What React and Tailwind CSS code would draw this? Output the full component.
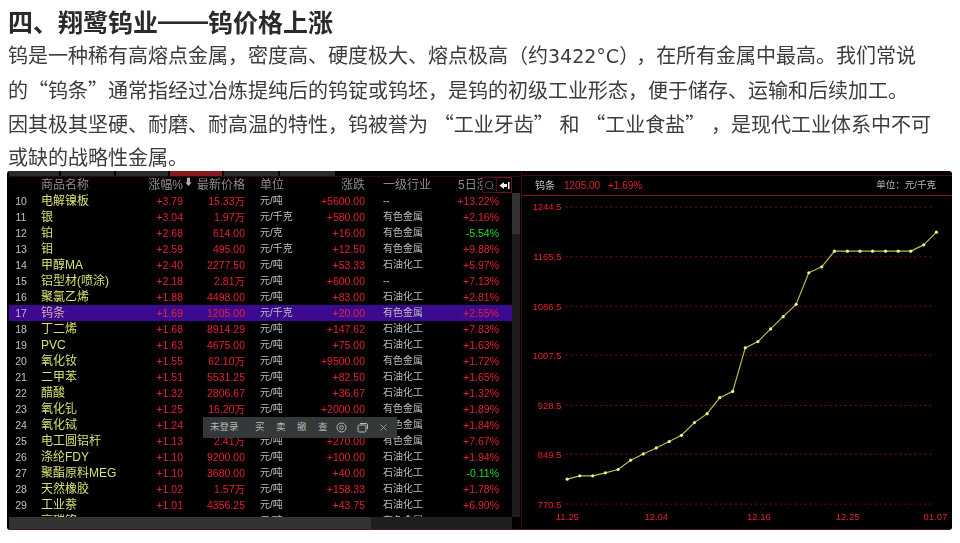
import React from "react";
import { Search, X } from "lucide-react";

const rows = [
  ["10","电解镍板","+3.79","15.33万","元/吨","+5600.00","--","+13.22%"],
  ["11","银","+3.04","1.97万","元/千克","+580.00","有色金属","+2.16%"],
  ["12","铂","+2.68","614.00","元/克","+16.00","有色金属","-5.54%"],
  ["13","钼","+2.59","495.00","元/千克","+12.50","有色金属","+9.88%"],
  ["14","甲醇MA","+2.40","2277.50","元/吨","+53.33","石油化工","+5.97%"],
  ["15","铝型材(喷涂)","+2.18","2.81万","元/吨","+600.00","--","+7.13%"],
  ["16","聚氯乙烯","+1.88","4498.00","元/吨","+83.00","石油化工","+2.81%"],
  ["17","钨条","+1.69","1205.00","元/千克","+20.00","有色金属","+2.55%"],
  ["18","丁二烯","+1.68","8914.29","元/吨","+147.62","石油化工","+7.83%"],
  ["19","PVC","+1.63","4675.00","元/吨","+75.00","石油化工","+1.63%"],
  ["20","氧化钕","+1.55","62.10万","元/吨","+9500.00","有色金属","+1.72%"],
  ["21","二甲苯","+1.51","5531.25","元/吨","+82.50","石油化工","+1.65%"],
  ["22","醋酸","+1.32","2806.67","元/吨","+36.67","石油化工","+1.32%"],
  ["23","氧化钆","+1.25","16.20万","元/吨","+2000.00","有色金属","+1.89%"],
  ["24","氧化铽","+1.24","","元/吨","","有色金属","+1.84%"],
  ["25","电工圆铝杆","+1.13","2.41万","元/吨","+270.00","有色金属","+7.67%"],
  ["26","涤纶FDY","+1.10","9200.00","元/吨","+100.00","石油化工","+1.94%"],
  ["27","聚酯原料MEG","+1.10","3680.00","元/吨","+40.00","石油化工","-0.11%"],
  ["28","天然橡胶","+1.02","1.57万","元/吨","+158.33","石油化工","+1.78%"],
  ["29","工业萘","+1.01","4356.25","元/吨","+43.75","石油化工","+6.90%"],
  ["30","高碳铬","+1.00","2.41万","元/吨","+240.00","有色金属","+7.48%"],
];

const pts = [
  [566.7,480],[579.3,476.7],[592.3,476.7],[605,473.7],[617.7,470.3],[630.3,461],[643,454.7],[656,448.7],
  [669,442.3],[681.3,436],[694.3,423.3],[707,414.3],[719.7,398.3],[732.7,392],[745.3,348.3],[758,342],
  [770.7,329.3],[783.3,317],[796.3,304.7],[809,273],[822,267],[834.7,251.3],[847.7,251.3],[860.3,251.3],
  [873,251.3],[886,251.3],[898.7,251.3],[911.3,251.3],[924.3,245],[937,232.3],
];

const grid = [["1244.5",207],["1165.5",257],["1086.5",306.5],["1007.5",355.5],["928.5",406],["849.5",455],["770.5",505]];
const xLabels = [["11.25",566.7],["12.04",656],["12.16",759],["12.25",848],["01.07",936]];
const tabs = [50, 53, 52, 52, 54, 55];

const sans = 'font-["Liberation_Sans","Noto_Sans_CJK_SC",sans-serif]';

function Row({ r }) {
  const active = r[0] === "17";
  const down = r[7].startsWith("-");
  return (
    <div className={`flex h-4 shrink-0 items-center whitespace-nowrap text-[10.5px] leading-4 ${active ? "bg-[#3c0a90]" : ""}`}>
      <div className={`w-8 pr-2 text-center font-medium ${active ? "text-[#c4b4d2]" : "text-[#c0c0c0]"}`}>{r[0]}</div>
      <div className={`w-[100px] text-[12px] ${active ? "text-[#dcb0ac]" : "text-[#d8e06c]"}`}>{r[1]}</div>
      <div className="w-[42px] text-right text-[#e8202e]">{r[2]}</div>
      <div className="w-[62px] text-right text-[#e8202e]">{r[3]}</div>
      <div className="w-[75px] pl-[15px] text-[10px] text-[#bcbcbc]">{r[4]}</div>
      <div className="w-[45px] text-right text-[#e8202e]">{r[5]}</div>
      <div className="w-[60px] pl-[18px] text-[10px] text-[#bcbcbc]">{r[6]}</div>
      <div className={`w-[74px] text-right ${down ? "text-[#18e018]" : "text-[#e8202e]"}`}>{r[7]}</div>
    </div>
  );
}

function Toolbar() {
  return (
    <div className="absolute left-[196px] top-[246px] flex h-[21px] w-[194px] items-center bg-[#343838] text-[9.5px] text-[#b4b8b8]">
      <span className="ml-[7px] w-[45px]">未登录</span>
      <span className="w-[21px]">买</span>
      <span className="w-[21px]">卖</span>
      <span className="w-[21px]">撤</span>
      <span className="w-[17px]">查</span>
      <svg className="ml-[1px] size-[11px]" viewBox="0 0 11 11" fill="none" stroke="#b8bcbc">
        <circle cx="5.5" cy="5.5" r="4.5" />
        <circle cx="5.5" cy="5.5" r="1.8" />
      </svg>
      <svg className="ml-[10px] size-[11px]" viewBox="0 0 11 11" fill="none" stroke="#b8bcbc">
        <rect x="1" y="3" width="8" height="7" rx="1.5" />
        <path d="M3 1.5h6a1.5 1.5 0 0 1 1.5 1.5v4" />
      </svg>
      <X className="ml-[10px] size-[11px] text-[#b8bcbc]" strokeWidth={1.5} />
    </div>
  );
}

export default function App() {
  return (
    <div className={`flex h-[543px] w-[960px] flex-col overflow-hidden bg-white ${sans}`}>
      <div className='flex h-[38px] shrink-0 items-center pl-2 pt-[3px] font-["Noto_Sans_CJK_SC",sans-serif] text-[25px] font-bold leading-[30px] text-[#2a2a2a] blur-[0.3px]'>
        四、翔鹭钨业<span className='font-["Liberation_Sans"] font-bold'>——</span>钨价格上涨
      </div>
      <div className='h-[133px] shrink-0 whitespace-nowrap pl-2 font-["Noto_Sans_CJK_SC",sans-serif] text-[20px] leading-[33.3px] text-[#3c3c3c] blur-[0.3px]'>
        <div>钨是一种稀有高熔点金属，密度高、硬度极大、熔点极高（约<span className='font-["DejaVu_Sans"] text-[19px]'>3422°C</span>）<span className="ml-[7px]">，</span>在所有金属中最高。我们常说</div>
        <div>的“钨条”通常指经过冶炼提纯后的钨锭或钨坯，是钨的初级工业形态，便于储存、运输和后续加工。</div>
        <div className="[word-spacing:1.3px]">因其极其坚硬、耐磨、耐高温的特性，钨被誉为 “工业牙齿” 和 “工业食盐” ，是现代工业体系中不可</div>
        <div>或缺的战略性金属。</div>
      </div>

      <div className="ml-[7px] flex h-[359px] w-[945px] shrink-0 overflow-hidden rounded-[3px] border-b border-[#4a1418] bg-black blur-[0.65px]">
        {/* Table side */}
        <div className="relative flex w-[514px] shrink-0 flex-col pl-[2px]">
          <div className="flex h-[5px] shrink-0 gap-[2px] overflow-hidden">
            {tabs.map((w, i) => (
              <div key={i} style={{ width: w }} className={i === 3 ? "bg-[#8a1a1e]" : "bg-[#2a2a2a]"} />
            ))}
          </div>
          <div className="flex h-[17px] shrink-0 items-center whitespace-nowrap border-t border-[#2a0a0c] text-[12px] text-[#8c8c8c]">
            <div className="w-8" />
            <div className="w-[100px]">商品名称</div>
            <div className="relative w-[42px] text-right">
              涨幅%
              <span className="absolute left-[43px] top-0 text-[9px] text-[#b0b0b0]">⬇</span>
            </div>
            <div className="w-[62px] text-right">最新价格</div>
            <div className="w-[75px] pl-[15px]">单位</div>
            <div className="w-[45px] text-right">涨跌</div>
            <div className="w-[60px] pl-[18px]">一级行业</div>
            <div className="w-[57px] overflow-hidden pl-[33px]">5日涨幅</div>
          </div>
          <div className="flex min-h-0 flex-1">
            <div className="flex w-[503px] shrink-0 flex-col overflow-hidden">
              {rows.map((r) => (
                <Row key={r[0]} r={r} />
              ))}
            </div>
            <div className="w-[8px] shrink-0 bg-[#1c1c1c]">
              <div className="h-[41px] bg-[#333333]" />
            </div>
          </div>
          <div className="flex h-[12px] w-[503px] shrink-0 bg-[#1e1e1e]">
            <div className="h-full w-[362px] bg-[#333333]" />
          </div>
          <div className="absolute left-[475px] top-[6px] flex h-[16px]">
            <div className="flex w-[15px] items-center justify-center border border-[#4a1014]">
              <Search className="size-[11px] text-[#888]" strokeWidth={1.5} />
            </div>
            <div className="flex w-[15px] items-center justify-center border border-l-0 border-[#6a1418]">
              <svg className="size-[11px]" viewBox="0 0 11 11" fill="#f0f0f0">
                <path d="M0.5 5.5 5 2v2h3v3H5v2z" />
                <rect x="9" y="2" width="1.5" height="7" />
              </svg>
            </div>
          </div>
          <Toolbar />
        </div>

        {/* Chart side */}
        <div className="flex min-w-0 flex-1 flex-col border-l border-[#3c0c10]">
          <div className="mt-1 flex h-[21px] shrink-0 items-center whitespace-nowrap border-y border-t-[#4c0c10] border-b-[#861418] pl-[13px] pr-[16px] text-[10px]">
            <span className="w-[29px] text-[#c0c0c0]">钨条</span>
            <span className="w-[44px] text-[#e8202e]">1205.00</span>
            <span className="text-[#e8202e]">+1.69%</span>
            <span className="ml-auto text-[9.5px] text-[#b8b8b8]">单位：元/千克</span>
          </div>
          <svg className="min-h-0 flex-1" viewBox="522 196 430 334" fontFamily="Liberation Sans, sans-serif">
            {grid.map(([t, y]) => (
              <g key={t}>
                <text x="561" y={y + 3.5} textAnchor="end" fontSize="9.5" fill="#e8202e">{t}</text>
                <line x1="565" x2="935" y1={y} y2={y} stroke="#7a161c" strokeWidth="1" strokeDasharray="2 3" />
              </g>
            ))}
            {xLabels.map(([t, x]) => (
              <text key={t} x={x} y="521" textAnchor="middle" fontSize="9.5" fill="#e8202e">{t}</text>
            ))}
            <polyline points={pts.map((p) => p.join(",")).join(" ")} fill="none" stroke="#b8be50" strokeWidth="1.2" strokeLinejoin="round" />
            {pts.map(([x, y], i) => (
              <circle key={i} cx={x} cy={y} r="1.6" fill="#f0f480" />
            ))}
          </svg>
        </div>
      </div>
    </div>
  );
}
